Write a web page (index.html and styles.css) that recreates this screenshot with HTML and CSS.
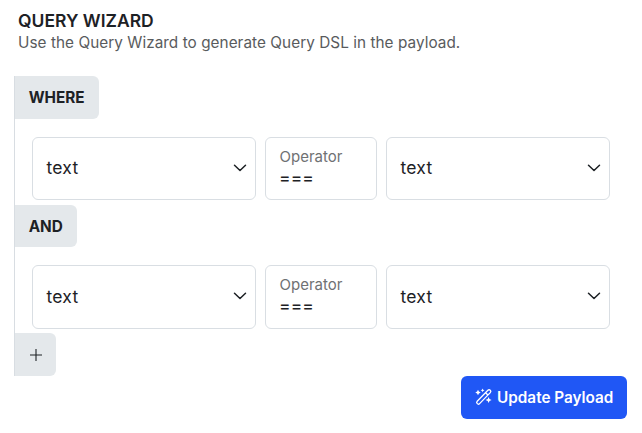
FILE: index.html
```
<!DOCTYPE html>
<html lang="en">
<head>
<meta charset="utf-8">
<title>Query Wizard</title>
<link rel="stylesheet" href="styles.css">
</head>
<body>
<main class="wizard">
  <header class="intro">
    <h1 class="title"><span>QUERY WIZARD</span></h1>
    <p class="subtitle"><span>Use the Query Wizard to generate Query DSL in the payload.</span></p>
  </header>
  <section class="query">
    <div class="tag where"><span>WHERE</span></div>
    <div class="condition first">
      <div class="field select"><span>text</span><svg class="chevron" viewBox="0 0 14 8"><path d="M1.500 1.200 7 6.500l5.500-5.300"/></svg></div>
      <div class="field operator"><span class="label">Operator</span><span class="value">===</span></div>
      <div class="field select"><span>text</span><svg class="chevron" viewBox="0 0 14 8"><path d="M1.500 1.200 7 6.500l5.500-5.300"/></svg></div>
    </div>
    <div class="tag and"><span>AND</span></div>
    <div class="condition second">
      <div class="field select"><span>text</span><svg class="chevron" viewBox="0 0 14 8"><path d="M1.500 1.200 7 6.500l5.500-5.300"/></svg></div>
      <div class="field operator"><span class="label">Operator</span><span class="value">===</span></div>
      <div class="field select"><span>text</span><svg class="chevron" viewBox="0 0 14 8"><path d="M1.500 1.200 7 6.500l5.500-5.300"/></svg></div>
    </div>
    <button class="tag add" aria-label="Add condition"><svg class="plus" viewBox="0 0 14 14"><path d="M7 1v12M1 7h12"/></svg></button>
  </section>
  <button class="update">
    <svg class="wand" viewBox="0 0 18 18"><path class="outline" d="M2.200 13.300 12.900 2.300a1.600 1.600 0 0 1 2.400 2.300L4.600 15.600a1.600 1.600 0 0 1-2.400-2.300ZM10.600 4.700l2.300 2.300"/><path class="spark" d="m3 1.800 .9 1.800 1.800.9-1.800.9L3 7.200l-.9-1.800-1.800-.9 1.800-.9ZM7.600.400l.6 1.300 1.300.6-1.300.6-.6 1.300-.6-1.300-1.300-.6 1.300-.6ZM13.600 9l.9 2.100 2.100.9-2.100.9-.9 2.100-.9-2.100-2.100-.9 2.100-.9Z"/></svg>
    <span>Update Payload</span>
  </button>
</main>
</body>
</html>
```
FILE: styles.css
```
* { box-sizing: border-box; }
body {
  margin: 0;
  background: #fff;
  color: #1d2125;
  font-family: Inter, "Liberation Sans", sans-serif;
}
button { border: 0; font-family: inherit; }
.wizard {
  display: flex;
  flex-direction: column;
  height: 433px;
  padding: 10px 15px 0 14px;
}
.intro { height: 66px; padding-left: 4px; }
.title {
  margin: 0;
  font-size: 17.500px;
  line-height: 22px;
  font-weight: 600;
}
.subtitle {
  margin: 0;
  color: #595b5d;
  font-size: 15.300px;
  line-height: 21px;
  letter-spacing: 0.055px;
  white-space: nowrap;
}
.query {
  height: 300px;
  border-left: 1px solid #d8dde2;
}
.tag {
  display: flex;
  align-items: center;
  padding: 0 0 0 13.700px;
  border-radius: 0 6px 6px 0;
  background: #e4e8eb;
  color: #1d2125;
  font-size: 15.300px;
  font-weight: 700;
}
.where { width: 84px; height: 43px; }
.and { width: 62px; height: 42px; }
.add { width: 41px; height: 43px; }
.condition {
  display: grid;
  grid-template-columns: 224px 112px 224px;
  gap: 9px;
  height: 86px;
  padding: 18px 0 5px 17px;
}
.second { padding-bottom: 4px; }
.field {
  border: 1px solid #d9dee3;
  border-radius: 6px;
}
.select {
  display: flex;
  align-items: center;
  justify-content: space-between;
  padding: 0 8px 0 13.500px;
  font-size: 17.500px;
  letter-spacing: 0.25px;
}
.select span { margin-bottom: 2px; }
.first .select { padding-bottom: 1px; }
.chevron {
  width: 14px;
  height: 8px;
  margin-bottom: 2px;
  fill: none;
  stroke: #1d2125;
  stroke-width: 1.500;
  stroke-linecap: round;
  stroke-linejoin: round;
}
.first .chevron { margin-bottom: 1px; }
.operator {
  display: flex;
  flex-direction: column;
  padding: 8px 0 0 13.500px;
}
.label {
  color: #6f7173;
  font-size: 15px;
  line-height: 22px;
}
.value {
  margin-left: -0.500px;
  font-size: 17.500px;
  line-height: 20px;
  letter-spacing: 0.1px;
}
.plus {
  width: 14px;
  height: 14px;
  fill: none;
  stroke: #1d2125;
  stroke-width: 1.100;
}
.update {
  display: flex;
  align-items: center;
  align-self: flex-end;
  gap: 4px;
  width: 166px;
  height: 43px;
  padding: 0 0 0 14px;
  border-radius: 6px;
  background: #2057f5;
  color: #fff;
  font-size: 15.300px;
  font-weight: 600;
  white-space: nowrap;
}
.wand { width: 18px; height: 18px; margin-top: -1px; }
.outline { fill: none; stroke: #fff; stroke-width: 1.300; stroke-linejoin: round; }
.spark { fill: #fff; }
```
